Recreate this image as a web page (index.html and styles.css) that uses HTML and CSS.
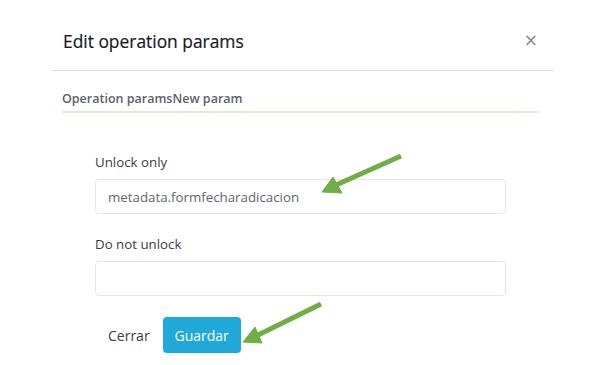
FILE: index.html
```html
<!DOCTYPE html>
<html lang="en">

<head>
  <meta charset="UTF-8">
  <meta name="viewport" content="width=device-width, initial-scale=1.0">
  <title>Edit operation params</title>
  <link rel="stylesheet" href="styles.css">
</head>

<body>
  <div class="modal">
    <div class="modal-header">
      <h4 class="modal-title">Edit operation params</h4>
      <button class="close" type="button">&times;</button>
    </div>

    <div class="modal-body">
      <ul class="tabs">
        <li class="tab">Operation params</li>
        <li class="tab">New param</li>
      </ul>

      <form class="params-form">
        <div class="form-group">
          <label class="form-label">Unlock only</label>
          <input class="form-control" type="text" value="metadata.formfecharadicacion">
        </div>
        <div class="form-group">
          <label class="form-label">Do not unlock</label>
          <input class="form-control" type="text" value="">
        </div>
        <div class="form-actions">
          <button class="btn btn-link" type="button">Cerrar</button>
          <button class="btn btn-info" type="button">Guardar</button>
        </div>
      </form>
    </div>
  </div>

  <!-- callout arrows pasted over the screenshot -->
  <svg class="callouts" width="599" height="365" viewBox="0 0 599 365">
    <g fill="#70ad47" stroke="#70ad47">
      <line x1="401" y1="156" x2="336" y2="185" stroke-width="5" />
      <polygon points="322,192 333,177 342,193" stroke-width="1" stroke-linejoin="round" />
      <line x1="321" y1="304" x2="256" y2="336" stroke-width="5" />
      <polygon points="243,342 255,327 262,343" stroke-width="1" stroke-linejoin="round" />
    </g>
  </svg>
</body>

</html>
```

FILE: styles.css
```css
* {
  margin: 0;
  padding: 0;
  box-sizing: border-box;
}

body {
  background: #fff;
  font-family: "Open Sans", "Noto Sans", sans-serif;
  color: #3c4043;
  position: relative;
  width: 599px;
  height: 365px;
  overflow: hidden;
}

ul {
  list-style: none;
}

.modal {
  margin-left: 52px;
  width: 502px;
}

.modal-header {
  height: 71px;
  display: flex;
  align-items: flex-start;
  justify-content: space-between;
  padding: 28px 16px 0 11px;
  border-bottom: 1px solid #d7dae0;
}

.modal-title {
  font-size: 17.4px;
  font-weight: 400;
  color: #151b1e;
  line-height: 26px;
  -webkit-text-stroke: 0.2px #151b1e;
}

.close {
  border: 0;
  background: none;
  font-family: "DejaVu Sans", sans-serif;
  font-size: 17px;
  color: #8a8a8a;
  line-height: 20px;
  margin-top: 2px;
}

.modal-body {
  padding: 19px 15px 0 10px;
}

.tabs {
  display: flex;
  border-bottom: 2px solid #dcefd2;
  padding-bottom: 3px;
}

.tab {
  font-size: 12.5px;
  font-weight: 600;
  color: #5c6166;
  line-height: 18px;
}

.params-form {
  padding: 40px 33px 0 33px;
}

.form-group {
  margin-bottom: 21px;
}

.form-label {
  display: block;
  font-size: 13.3px;
  color: #3c4043;
  line-height: 18px;
  margin-bottom: 8px;
}

.form-control {
  display: block;
  width: 100%;
  height: 35px;
  padding: 0 12px;
  border: 1px solid #e4e6e9;
  border-radius: 4px;
  font-family: inherit;
  font-size: 13.3px;
  color: #5c6873;
  outline: none;
}

.form-actions {
  display: flex;
  align-items: center;
  gap: 13px;
}

.btn {
  font-family: inherit;
  font-size: 14px;
  border: 0;
  border-radius: 4px;
  cursor: pointer;
}

.btn-link {
  background: none;
  color: #3c4043;
  padding: 0 0 0 13px;
}

.btn-info {
  width: 78px;
  height: 36px;
  background: #20a8d8;
  color: #fff;
}

.callouts {
  position: absolute;
  left: 0;
  top: 0;
  pointer-events: none;
}
```
